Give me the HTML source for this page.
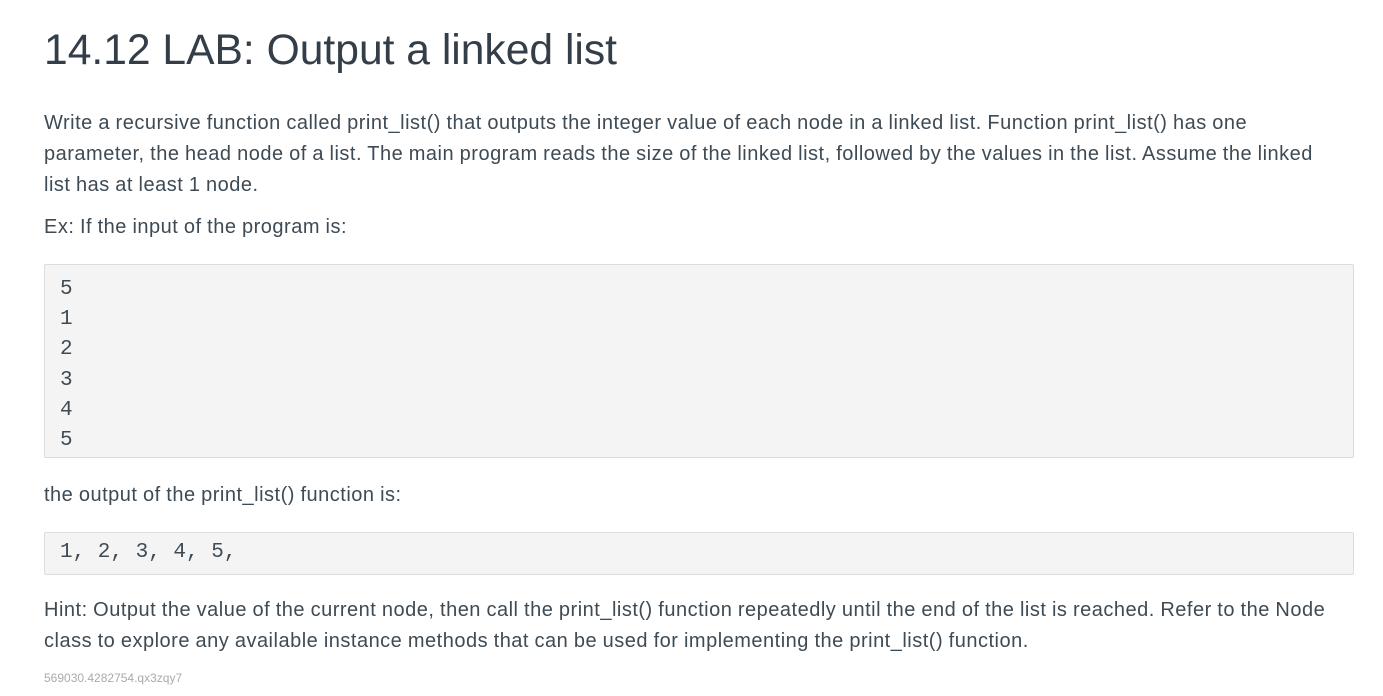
<!DOCTYPE html>
<html><head><style>
body{margin:0;background:#fff;font-family:"Liberation Sans",sans-serif;color:#3d4852;}
.w{position:absolute;left:44px;width:1330px;}
h1{position:absolute;left:44px;top:23px;margin:0;font-weight:normal;font-size:42.6px;line-height:54px;color:#333e48;}
p{margin:0;font-size:20px;line-height:31px;color:#3e4a54;letter-spacing:0.5px;word-spacing:-0.5px;}
.box{background:#f4f4f4;border:1px solid #dcdcdc;border-radius:2px;box-sizing:border-box;font-family:"Liberation Mono",monospace;font-size:21px;color:#3e4a54;padding-left:15px;width:1310px;}
</style></head><body>
<h1>14.12 LAB: Output a linked list</h1>
<p class="w" style="top:108px;">Write a recursive function called print_list() that outputs the integer value of each node in a linked list. Function print_list() has one<br>parameter, the head node of a list. The main program reads the size of the linked list, followed by the values in the list. Assume the linked<br>list has at least 1 node.</p>
<p class="w" style="top:212px;">Ex: If the input of the program is:</p>
<div class="w box" style="top:264px;height:194px;padding-top:10px;line-height:30.2px;">5<br>1<br>2<br>3<br>4<br>5</div>
<p class="w" style="top:480px;">the output of the print_list() function is:</p>
<div class="w box" style="top:532px;height:43px;line-height:40px;">1, 2, 3, 4, 5,</div>
<p class="w" style="top:595px;">Hint: Output the value of the current node, then call the print_list() function repeatedly until the end of the list is reached. Refer to the Node<br>class to explore any available instance methods that can be used for implementing the print_list() function.</p>
<div class="w" style="top:671px;font-size:12px;color:#aaa;">569030.4282754.qx3zqy7</div>
</body></html>
